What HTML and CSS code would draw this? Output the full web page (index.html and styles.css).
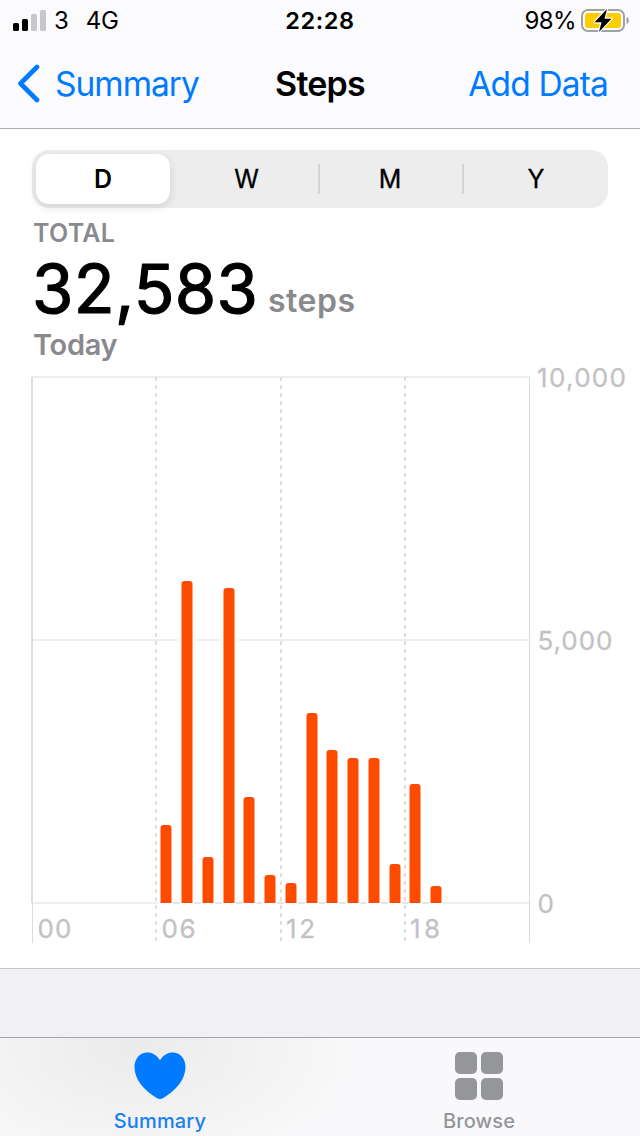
FILE: index.html
```html
<!DOCTYPE html>
<html lang="en">
<head>
<meta charset="utf-8">
<title>Steps</title>
<link rel="stylesheet" href="styles.css">
</head>
<body>
<div class="screen">
  <header class="header">
    <div class="status">
      <div class="carrier">
        <svg class="signal" width="34" height="22" viewBox="0 0 34 22"><rect y="13" width="6" height="8" rx="1.5"/><rect x="9" y="9" width="6" height="12" rx="1.5"/><rect x="18" y="4" width="6" height="17" rx="1.5" fill="#c8c8cb"/><rect x="27" width="6" height="21" rx="1.5" fill="#c8c8cb"/></svg>
        <span class="operator">3</span><span class="network">4G</span>
      </div>
      <time class="clock">22:28</time>
      <div class="power">
        <span class="percent">98%</span>
        <svg class="battery" width="50" height="28" viewBox="0 0 50 28"><rect x="1" y="3" width="42" height="21" rx="6" fill="#fff" stroke="#a1a1a4" stroke-width="2"/><rect x="4" y="6" width="36" height="15" rx="3" fill="#fc0"/><path d="M45.5 10v7c1.7-.5 2.3-1.8 2.3-3.5s-.6-3-2.300-3.500z" fill="#a1a1a4"/><path d="M26 2 L13.500 15.300 H20.500 L18 25 L30.500 11.700 H23.500 Z" stroke="#fff" stroke-width="2.500" paint-order="stroke" stroke-linejoin="round"/></svg>
      </div>
    </div>
    <nav class="nav">
      <a class="back"><svg width="24" height="40" viewBox="0 0 24 40"><path d="M21 3 L4.500 19.500 L21 36" fill="none" stroke="#007aff" stroke-width="4.600" stroke-linecap="round" stroke-linejoin="round"/></svg><span>Summary</span></a>
      <h1 class="title">Steps</h1>
      <a class="add">Add Data</a>
    </nav>
  </header>
  <main class="content">
    <div class="segments">
      <button class="segment selected">D</button><button class="segment">W</button><button class="segment divided">M</button><button class="segment divided">Y</button>
    </div>
    <section class="totals">
      <div class="caption">TOTAL</div>
      <div class="amount"><svg class="figure" width="228" height="74"><text class="number" x="-1" y="63" textLength="226">32,583</text></svg><span class="unit">steps</span></div>
      <div class="day">Today</div>
    </section>
    <svg class="chart" width="640" height="580" viewBox="0 370 640 580">
      <g class="grid"><path d="M32 377H530M32 640H530M32 903H530"/></g>
      <path class="edge" d="M32 377V903"/><path class="thin" d="M32.500 903V943M529.500 377V943"/>
      <path class="dashes" d="M156 377V943M281 377V943M405 377V943"/>
      <g class="gaps"><path d="M187 635V645M229 635V645"/><path d="M158 903H443"/></g>
      <g class="ticks"><path d="M173.500 903h6M194.500 903h6M215.500 903h6M236 903h6M256.500 903h6M277.500 903h6M298.500 903h6M319 903h6M339.500 903h6M360.500 903h6M381.500 903h6M402 903h6M422.500 903h6"/></g>
      <g class="bars">
        <path d="M160.500 903V828q0-3 3-3h5q3 0 3 3V903z"/>
        <path d="M181.500 903V584q0-3 3-3h5q3 0 3 3V903z"/>
        <path d="M202.500 903V860q0-3 3-3h5q3 0 3 3V903z"/>
        <path d="M223.500 903V591q0-3 3-3h5q3 0 3 3V903z"/>
        <path d="M243.500 903V800q0-3 3-3h5q3 0 3 3V903z"/>
        <path d="M264.500 903V878q0-3 3-3h5q3 0 3 3V903z"/>
        <path d="M285.500 903V886q0-3 3-3h5q3 0 3 3V903z"/>
        <path d="M306.500 903V716q0-3 3-3h5q3 0 3 3V903z"/>
        <path d="M326.500 903V753q0-3 3-3h5q3 0 3 3V903z"/>
        <path d="M347.500 903V761q0-3 3-3h5q3 0 3 3V903z"/>
        <path d="M368.500 903V761q0-3 3-3h5q3 0 3 3V903z"/>
        <path d="M389.500 903V867q0-3 3-3h5q3 0 3 3V903z"/>
        <path d="M409.500 903V787q0-3 3-3h5q3 0 3 3V903z"/>
        <path d="M430.500 903V889q0-3 3-3h5q3 0 3 3V903z"/>
      </g>
      <g class="labels">
        <text x="537" y="387" textLength="89">10,000</text><text x="537.500" y="650" textLength="75">5,000</text><text x="537.500" y="913">0</text>
        <text x="37.500" y="938" textLength="34">00</text><text x="161.500" y="938" textLength="34">06</text><text x="286" y="938" textLength="29">12</text><text x="410" y="938" textLength="30">18</text>
      </g>
    </svg>
  </main>
  <div class="spacer"></div>
  <footer class="tabs">
    <a class="tab active"><svg width="52" height="48" viewBox="0 0 52 48"><path d="M26 8.200C22.700 3 18.200.5 13.500.5 6 .5.500 6.500.500 15c0 12.500 9.500 23 21.800 30.700 2.600 1.700 4.800 1.700 7.400 0C42 38 51.500 27.500 51.500 15 51.500 6.500 46 .5 38.500.5 33.800.5 29.300 3 26 8.200z" fill="#007aff"/></svg><span>Summary</span></a>
    <a class="tab browse"><svg width="48" height="48" viewBox="0 0 48 48" fill="#95969a"><rect width="22" height="22" rx="5"/><rect x="26" width="22" height="22" rx="5"/><rect y="26" width="22" height="22" rx="5"/><rect x="26" y="26" width="22" height="22" rx="5"/></svg><span>Browse</span></a>
  </footer>
</div>
</body>
</html>
```
FILE: styles.css
```css
* { box-sizing: border-box; }
body { margin: 0; font-family: Inter, "Liberation Sans", sans-serif; color: #000; }
svg { display: block; flex: none; }
.screen { width: 640px; height: 1136px; display: flex; flex-direction: column; overflow: hidden; background: #fff; }
.header { height: 129px; flex: none; background: #fbfbfd; border-bottom: 1px solid #adadb0; }
.status { height: 40px; display: grid; grid-template-columns: 1fr auto 1fr; align-items: center; font-size: 24px; line-height: 42px; }
.carrier { display: flex; padding-left: 13px; align-items: center; }
.signal { margin-right: 7px; }
.network { margin-left: 17px; letter-spacing: -0.4px; }
.clock { font-weight: 600; font-size: 23.5px; letter-spacing: 0.6px; }
.power { display: flex; justify-content: flex-end; align-items: center; padding-right: 9px; }
.percent { letter-spacing: -0.6px; margin-right: 5px; }
.nav { height: 88px; display: grid; grid-template-columns: 1fr auto 1fr; align-items: center; font-size: 33.5px; line-height: 88px; }
.back { display: flex; align-items: center; color: #007aff; padding-left: 16px; letter-spacing: -1px; }
.back span { margin-left: 15px; }
.title { margin: 0; font-size: 34px; font-weight: 600; letter-spacing: -0.8px; }
.add { color: #007aff; text-align: right; padding-right: 32px; letter-spacing: -0.85px; }
.content { height: 839px; flex: none; padding-top: 21px; }
.segments { margin: 0 32px; height: 58px; padding: 4px 0 4px 4px; display: grid; grid-template-columns: 134px 148px 144px 1fr; border-radius: 17px; background: #ededee; }
.segment { border: 0; padding: 0; background: none; font: 400 25px/50px Inter, sans-serif; -webkit-text-stroke: 0.3px; color: #000; position: relative; }
.segment:nth-child(2) { padding-left: 5px; }
.segment:nth-child(4) { padding-left: 2px; }
.selected { background: #fff; border-radius: 13px; font-weight: 600; -webkit-text-stroke: 0; box-shadow: 0 3px 10px rgba(0,0,0,.12); }
.divided::before { content: ""; position: absolute; left: 0; top: 10px; width: 2px; height: 30px; background: #d4d4d6; }
.totals { height: 154px; padding-left: 33px; font-weight: 600; color: #8a8a8e; }
.caption { font-size: 25px; line-height: 50px; height: 42px; letter-spacing: 0.3px; }
.amount { display: flex; height: 74px; }
.figure, .chart { overflow: visible; }
.number { font-size: 67px; font-weight: 400; fill: #000; stroke: #000; stroke-width: 1.2; stroke-linejoin: round; }
.unit { margin-left: 7px; font-size: 32px; line-height: 102px; letter-spacing: 0.5px; }
.day { font-size: 29px; line-height: 42px; letter-spacing: -0.3px; }
.chart { margin-top: 8px; }
.grid, .edge, .dashes, .thin, .gaps, .ticks { fill: none; stroke-width: 2; }
.grid { stroke: #eee; }
.edge { stroke: #dedede; }
.thin { stroke: #dcdcdc; stroke-width: 1; }
.dashes { stroke: #dedede; stroke-dasharray: 4 4; }
.gaps { stroke: #fff; stroke-width: 18; }
.gaps path + path { stroke-width: 3; }
.ticks { stroke: #e5e5e5; }
.bars { fill: #ff4b00; }
.labels { font-size: 26px; font-weight: 400; fill: #c2c2c4; stroke: #c2c2c4; stroke-width: 0.3; }
.spacer { height: 69px; flex: none; background: #f0f0f5; border-top: 1px solid #c3c3c7; }
.tabs { height: 99px; flex: none; display: grid; grid-template-columns: 1fr 1fr; border-top: 1px solid #a4a4a9; background: radial-gradient(ellipse 230px 130px at 135px 10px, #ebebeb, #f9f9fb); }
.tab { display: flex; flex-direction: column; align-items: center; padding-top: 14px; font-size: 20px; font-weight: 500; line-height: 24px; letter-spacing: 0.15px; color: #95969a; }
.browse { padding-right: 2px; }
.tab span { margin-top: 9px; }
.active { color: #1880f0; }
```
